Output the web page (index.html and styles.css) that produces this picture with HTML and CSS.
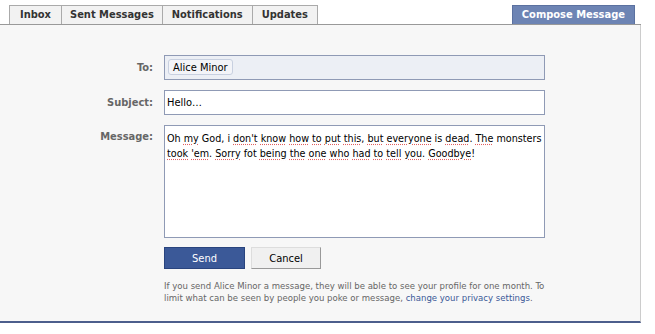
FILE: index.html
```html
<!DOCTYPE html>
<html lang="en">
<head>
    <title>Compose Message</title>
    <meta name="viewport" content="width=device-width, initial-scale=1">
    <link rel="stylesheet" href="styles.css">
</head>
<body>
    <div class="page">
        <div class="tabs">
            <a class="tab" href="#">Inbox</a>
            <a class="tab" href="#">Sent Messages</a>
            <a class="tab" href="#">Notifications</a>
            <a class="tab" href="#">Updates</a>
            <a class="tab compose" href="#">Compose Message</a>
        </div>
        <div class="content">
            <form class="form" action="">
                <label class="label">To:</label>
                <div class="field to">
                    <span class="token">Alice Minor</span>
                </div>

                <label class="label">Subject:</label>
                <div class="field subject">Hello…</div>

                <label class="label label-top">Message:</label>
                <div class="field message">Oh <span class="sp">my</span> God, i <span class="sp">don't</span> <span class="sp">know</span> <span class="sp">how</span> <span class="sp">to</span> <span class="sp">put</span> <span class="sp">this</span>, <span class="sp">but</span> <span class="sp">everyone</span> is <span class="sp">dead</span>. <span class="sp">The</span> monsters <span class="sp">took</span> <span class="sp">'em</span>. <span class="sp">Sorry</span> fot <span class="sp">being</span> <span class="sp">the</span> <span class="sp">one</span> <span class="sp">who</span> <span class="sp">had</span> <span class="sp">to</span> <span class="sp">tell</span> <span class="sp">you</span>. <span class="sp">Goodbye</span>!</div>

                <span></span>
                <div class="buttons">
                    <input class="btn btn-send" type="button" value="Send">
                    <input class="btn btn-cancel" type="button" value="Cancel">
                </div>

                <span></span>
                <p class="help">If you send Alice Minor a message, they will be able to see your profile for one month. To limit what can be seen by people you poke or message, <a href="#">change your privacy settings</a>.</p>
            </form>
        </div>
    </div>
</body>
</html>
```

FILE: styles.css
```css
html {
    font-family: "DejaVu Sans Condensed", "DejaVu Sans", Verdana, sans-serif;
}
body {
    margin: 0;
    background: #fff;
    font-size: 11px;
    color: #333;
}
.page {
    width: 641px;
}
.tabs {
    display: flex;
    align-items: flex-end;
    height: 24px;
    padding-left: 9px;
    border-bottom: 1px solid #999;
}
.tab {
    display: block;
    height: 18px;
    line-height: 18px;
    padding: 0 9px;
    background: #f2f2f2;
    border: 1px solid #aaa;
    border-bottom: none;
    border-right: none;
    color: #333;
    font-weight: bold;
    text-decoration: none;
}
.tab:first-child {
    padding: 0 10px;
}
.tab:nth-child(2) {
    padding: 0 8px;
}
.tab:nth-child(4) {
    border-right: 1px solid #aaa;
}
.compose {
    margin-left: auto;
    margin-right: 6px;
    padding: 0 9px;
    background: #6d84b4;
    border: 1px solid #5b71a0;
    border-bottom: none;
    color: #fff;
}
.content {
    height: 298px;
    background: #f7f7f7;
    border-right: 1px solid #ccc;
    border-bottom: 2px solid #4c5e8c;
    box-sizing: border-box;
    padding-top: 30px;
}
.form {
    display: grid;
    grid-template-columns: 153px 381px;
    column-gap: 11px;
    row-gap: 10px;
    margin: 0;
}
.label {
    text-align: right;
    font-weight: bold;
    color: #666;
    align-self: center;
}
.label-top {
    align-self: start;
    padding-top: 5px;
}
.field {
    box-sizing: border-box;
    border: 1px solid #8f9ab5;
    background: #fff;
    color: #000;
}
.to {
    height: 25px;
    background: #eceff5;
    padding: 3px;
}
.token {
    display: inline-block;
    height: 16px;
    line-height: 15px;
    box-sizing: border-box;
    padding: 0 4px;
    background: #f3f4f8;
    border: 1px solid #c8d0e0;
    border-radius: 3px;
}
.subject {
    height: 25px;
    line-height: 23px;
    padding: 0 2px;
}
.message {
    height: 113px;
    padding: 5px 2px;
    font-size: 10.7px;
    line-height: 15px;
}
.sp {
    text-decoration: underline dotted #e06060;
    text-underline-offset: 2px;
}
.buttons {
    display: flex;
    gap: 6px;
    margin-top: -1px;
}
.btn {
    height: 22px;
    font-family: inherit;
    font-size: 11px;
    margin: 0;
    box-sizing: border-box;
}
.btn-send {
    width: 81px;
    background: #3b5998;
    border: 1px solid #29447e;
    color: #fff;
}
.btn-cancel {
    width: 70px;
    background: #f0f0f0;
    border: 1px solid #999;
    border-top-color: #ddd;
    border-left-color: #ddd;
    color: #000;
}
.help {
    margin: 0;
    padding-top: 1px;
    font-size: 9.5px;
    line-height: 12px;
    color: #666;
}
.help a {
    color: #3b5998;
    text-decoration: none;
}
```
